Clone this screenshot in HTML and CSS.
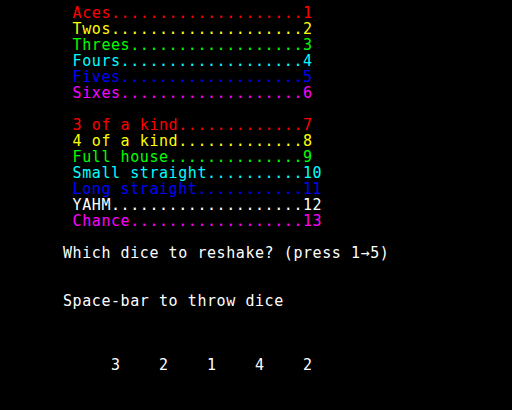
FILE: index.html
```html
<!DOCTYPE html>
<html>
<head>
<meta charset="utf-8">
<link rel="stylesheet" href="styles.css">
</head>
<body>
<div class="screen">
  <div class="row red"> Aces....................1</div>
  <div class="row yellow"> Twos....................2</div>
  <div class="row green"> Threes..................3</div>
  <div class="row cyan"> Fours...................4</div>
  <div class="row blue"> Fives...................5</div>
  <div class="row magenta"> Sixes...................6</div>
  <div class="row"></div>
  <div class="row red"> 3 of a kind.............7</div>
  <div class="row yellow"> 4 of a kind.............8</div>
  <div class="row green"> Full house..............9</div>
  <div class="row cyan"> Small straight..........10</div>
  <div class="row blue"> Long straight...........11</div>
  <div class="row white"> YAHM....................12</div>
  <div class="row magenta"> Chance..................13</div>
  <div class="row"></div>
  <div class="row white">Which dice to reshake? (press 1→5)</div>
  <div class="row"></div>
  <div class="row"></div>
  <div class="row white">Space-bar to throw dice</div>
  <div class="row"></div>
  <div class="row"></div>
  <div class="row"></div>
  <div class="row white">     3    2    1    4    2</div>
</div>
</body>
</html>
```

FILE: styles.css
```css
html, body {
  margin: 0;
  padding: 0;
  background: #000000;
  width: 512px;
  height: 410px;
  overflow: hidden;
}

.screen {
  display: flex;
  flex-direction: column;
  padding: 5px 0 0 63px;
  font-family: "DejaVu Sans Mono", monospace;
  font-size: 15px;
  letter-spacing: 0.569px;
  line-height: 16px;
  color: #ffffff;
}

.row {
  height: 16px;
  white-space: pre;
}

.red { color: #ff0000; }
.yellow { color: #ffff00; }
.green { color: #00ff00; }
.cyan { color: #00ffff; }
.blue { color: #0000ff; }
.magenta { color: #ff00ff; }
.white { color: #ffffff; }
```
